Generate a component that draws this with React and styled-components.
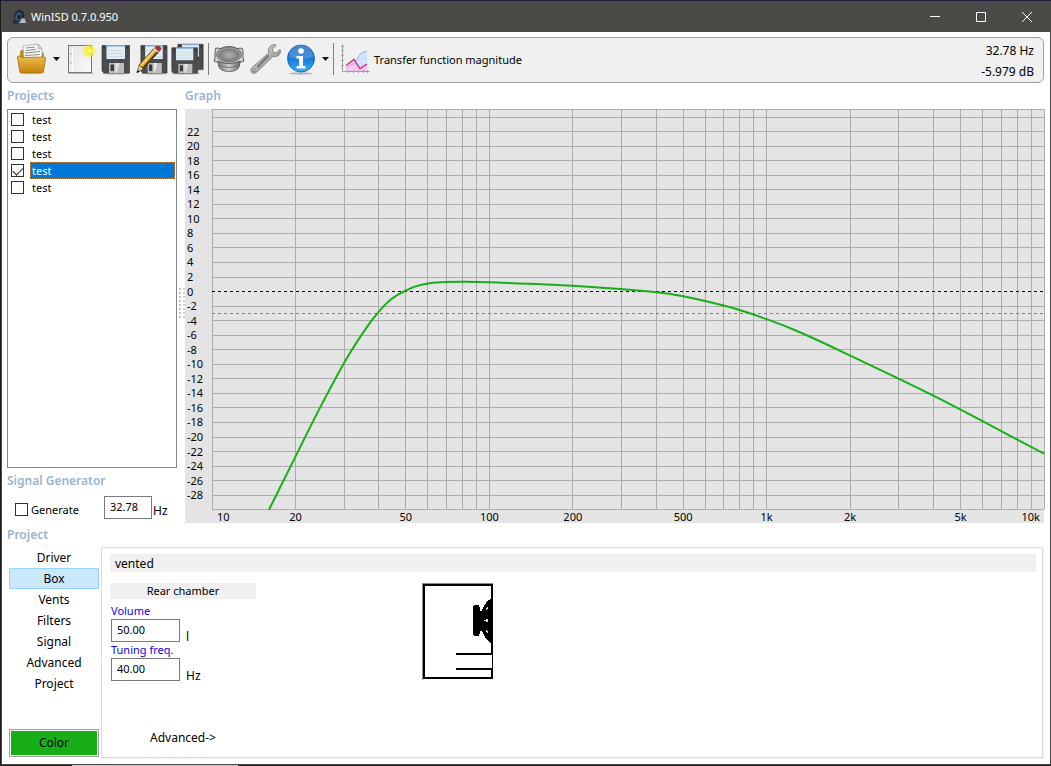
import React, { useState } from "react";
import styled, { createGlobalStyle } from "styled-components";

const GlobalStyle = createGlobalStyle`
    * {
        box-sizing: border-box;
    }
    body {
        margin: 0;
        font-family: "Noto Sans", "Open Sans", sans-serif;
        font-size: 12px;
        color: #000;
    }
    button, input {
        font: inherit;
        color: inherit;
    }
`;

const Desktop = styled.div`
    min-height: 100vh;
    display: flex;
    padding: 1px 0 1px 1px;
    background: linear-gradient(to right, #1c1c1e 72px, #c9c9c6 72px, #c9c9c6 238px, #1c1c1e 238px);
`;

const Window = styled.div`
    flex: 1;
    display: flex;
    flex-direction: column;
    background-color: #fff;
    border: 1px solid #4b4a47;
    border-top: none;
    box-shadow: 0 -1px 0 #251a40;
`;

const TitleBar = styled.header`
    display: flex;
    align-items: center;
    height: 31px;
    padding-left: 9px;
    gap: 4px;
    background-color: #4b4a47;
    color: #fff;
`;

const TitleText = styled.h1`
    flex: 1;
    margin: 0;
    font-size: 11px;
    font-weight: 400;
`;

const WindowButtons = styled.div`
    display: flex;
    height: 100%;
`;

const WindowBtn = styled.button`
    width: 46px;
    height: 100%;
    padding: 0;
    border: none;
    background: none;
    display: flex;
    justify-content: center;
    align-items: center;
`;

const Content = styled.main`
    flex: 1;
    display: flex;
    flex-direction: column;
    padding: 5px 6px 6px 5px;
`;

const Toolbar = styled.div`
    display: flex;
    align-items: center;
    height: 46px;
    padding: 0 9px 2px 6px;
    border: 1px solid #a0a0a0;
    border-radius: 6px;
    background-color: #f0f0f0;
`;

const ToolBtn = styled.button`
    width: ${props => props.$narrow ? "12px" : "36px"};
    height: 36px;
    padding: 0;
    border: none;
    background: none;
    display: flex;
    justify-content: center;
    align-items: center;
`;

const Separator = styled.div`
    width: 1px;
    height: 32px;
    margin: 0 2px;
    background-color: #808080;
`;

const PlotBtn = styled.button`
    display: flex;
    align-items: center;
    gap: 3px;
    padding: 0 0 0 3px;
    border: none;
    background: none;
    font-size: 11px;
`;

const Readout = styled.div`
    margin-left: auto;
    padding-top: 4px;
    text-align: right;
    line-height: 21px;
`;

const GroupTitle = styled.h2`
    margin: 0;
    font-size: 12px;
    font-weight: 600;
    line-height: 24px;
    color: #99b4d1;
`;

const Workspace = styled.div`
    flex: 1;
    display: grid;
    grid-template-columns: 170px 8px 1fr;
`;

const Column = styled.section`
    display: flex;
    flex-direction: column;
    min-width: 0;
    padding-top: 1px;
`;

const Splitter = styled.div`
    align-self: center;
    justify-self: end;
    width: 6px;
    height: 30px;
    border-left: 2px dotted #c4c4c4;
    border-right: 2px dotted #d0d0d0;
`;

const ProjectList = styled.ul`
    flex: 1;
    margin: 1px 0;
    padding: 1px;
    list-style: none;
    border: 1px solid #828790;
`;

const ProjectItem = styled.li`
    display: flex;
    align-items: center;
    gap: 6px;
    height: 17px;
    padding-left: 2px;
    font-size: 11px;
`;

const ProjectName = styled.label`
    flex: 1;
    padding-left: 2px;
    line-height: 17px;
    color: ${props => props.$selected ? "#fff" : "#000"};
    background-color: ${props => props.$selected ? "#0078d7" : "transparent"};
    outline: ${props => props.$selected ? "1px dotted #c98b4c" : "none"};
    outline-offset: -1px;
`;

const Check = styled.input.attrs({ type: "checkbox" })`
    appearance: none;
    flex: none;
    width: 13px;
    height: 13px;
    margin: 0;
    border: 1px solid #333;
    background-color: #fff;
    &:checked::after {
        content: "";
        display: block;
        width: 9px;
        height: 5px;
        margin: 2px 0 0 1px;
        border-left: 1px solid #222;
        border-bottom: 1px solid #222;
        transform: rotate(-45deg);
    }
`;

const GeneratorRow = styled.div`
    display: flex;
    align-items: center;
    gap: 1px;
    padding: 3px 0 4px 8px;
`;

const GeneratorToggle = styled.label`
    flex: 1;
    display: flex;
    align-items: center;
    gap: 3px;
    padding-top: 4px;
    font-size: 11px;
    line-height: 16px;
`;

const NumberInput = styled.input`
    width: ${props => props.$width};
    height: 23px;
    padding: 0 0 2px 5px;
    border: 1px solid #7a7a7a;
    border-radius: 0;
    outline: none;
    background-color: #fff;
    font-size: 11px;
`;

const Unit = styled.span`
    align-self: flex-end;
    width: 24px;
    line-height: 16px;
`;

const Chart = styled.div`
    flex: 1;
    display: grid;
    grid-template-columns: 27px 1fr;
    grid-template-rows: 1fr 14px;
    margin-top: 1px;
    background-color: #e4e4e4;
    svg {
        display: block;
        width: 100%;
        height: 100%;
        min-height: 0;
    }
    text {
        font-size: 11px;
    }
`;

const PlotCell = styled.div`
    min-height: 0;
    grid-column: ${props => props.$col};
`;

const ProjectArea = styled.div`
    display: grid;
    grid-template-columns: 94px 1fr;
    min-height: 211px;
    padding-right: 1px;
`;

const Tabs = styled.nav`
    display: flex;
    flex-direction: column;
    padding: 0 2px;
`;

const Tab = styled.button`
    height: 21px;
    padding: 0;
    border: 1px solid ${props => props.$active ? "#99d1ff" : "transparent"};
    background-color: ${props => props.$active ? "#cce8ff" : "transparent"};
    line-height: 19px;
`;

const ColorBtn = styled.button`
    height: 28px;
    margin: auto 0 1px;
    padding: 0;
    border: 1px solid #a0a0a0;
    background-color: #17ae17;
    box-shadow: inset 0 0 0 1px #f4f4f4;
    line-height: 24px;
`;

const Panel = styled.section`
    padding: 6px 6px 6px 8px;
    border: 1px solid #dcdcdc;
    box-shadow: 1px 1px 0 #f0f0f0;
    display: flex;
    flex-direction: column;
`;

const BoxType = styled.div`
    padding: 1px 0 0 5px;
    margin-bottom: 11px;
    line-height: 17px;
    background-color: #f0f0f0;
`;

const PanelBody = styled.div`
    flex: 1;
    display: flex;
    align-items: flex-start;
    gap: 166px;
`;

const Chamber = styled.div`
    align-self: stretch;
    display: flex;
    flex-direction: column;
    width: 146px;
`;

const ChamberTitle = styled.h3`
    margin: 0 0 4px;
    font-size: 11px;
    font-weight: 400;
    line-height: 16px;
    text-align: center;
    background-color: #f0f0f0;
`;

const FieldLabel = styled.label`
    padding-left: 1px;
    font-size: 11px;
    line-height: 16px;
    color: #1400e6;
`;

const FieldRow = styled.div`
    display: flex;
    gap: 6px;
    padding-left: 1px;
    ${Unit} {
        line-height: 11px;
    }
`;

const AdvancedBtn = styled.button`
    align-self: center;
    margin: auto 0 4px;
    padding: 0;
    border: none;
    background: none;
    line-height: 18px;
`;

const PLOT_W = 832;
const PLOT_H = 400;
const DB_TOP = 25.1;
const DB_BOTTOM = -29.9;

const fx = hz => (Math.log10(hz / 10) / 3) * PLOT_W;
const dy = db => ((DB_TOP - db) / (DB_TOP - DB_BOTTOM)) * PLOT_H;
const xPercent = hz => `${(fx(hz) / PLOT_W) * 100}%`;
const yPercent = db => `${(dy(db) / PLOT_H) * 100}%`;

const freqLines = [10, 100, 1000].flatMap(d => [1, 2, 3, 4, 5, 6, 7, 8, 9].map(n => n * d)).concat(10000);
const dbLines = Array.from({ length: 27 }, (_, i) => 24 - i * 2);
const dbLabels = Array.from({ length: 26 }, (_, i) => 22 - i * 2);

const freqLabels = [
    { hz: 10, text: "10", anchor: "start", dx: 5 },
    { hz: 20, text: "20" },
    { hz: 50, text: "50" },
    { hz: 100, text: "100" },
    { hz: 200, text: "200" },
    { hz: 500, text: "500" },
    { hz: 1000, text: "1k" },
    { hz: 2000, text: "2k" },
    { hz: 5000, text: "5k" },
    { hz: 10000, text: "10k", anchor: "end", dx: -4 },
];

// [Hz, dB]
const response = [
    [16.05, -30], [20, -22.7], [24.5, -16], [30.7, -9.1], [37.1, -4.3], [41.4, -2.1],
    [44.6, -0.95], [49.7, 0.1], [54.5, 0.75], [61, 1.15], [70, 1.32], [82, 1.35], [100, 1.28], [200, 0.8],
    [395, -0.07], [500, -0.65], [744, -2.2], [1000, -3.8], [1318, -5.6],
    [2000, -8.8], [4009, -14.35], [10000, -22.3],
];

const smoothPath = points => {
    const p = points.map(([hz, db]) => [fx(hz), dy(db)]);
    const slope = p.map((_, i) => {
        const a = p[Math.max(i - 1, 0)];
        const b = p[Math.min(i + 1, p.length - 1)];
        return (b[1] - a[1]) / (b[0] - a[0]);
    });
    let d = `M${p[0][0]} ${p[0][1]}`;
    for (let i = 1; i < p.length; i++) {
        const h = (p[i][0] - p[i - 1][0]) / 3;
        d += ` C${p[i - 1][0] + h} ${p[i - 1][1] + slope[i - 1] * h} ${p[i][0] - h} ${p[i][1] - slope[i] * h} ${p[i][0]} ${p[i][1]}`;
    }
    return d;
};

const ResponseChart = () => (
    <Chart>
        <PlotCell $col="1">
            <svg>
                {dbLabels.map(db => (
                    <text key={db} x="2" y={yPercent(db)} dy="4">{db}</text>
                ))}
            </svg>
        </PlotCell>
        <PlotCell $col="2">
            <svg viewBox={`0 0 ${PLOT_W} ${PLOT_H}`} preserveAspectRatio="none" overflow="visible">
                <g stroke="#acacac" fill="none" shapeRendering="crispEdges">
                    {freqLines.map(hz => (
                        <line key={hz} x1={fx(hz)} x2={fx(hz)} y1="0" y2={PLOT_H} vectorEffect="non-scaling-stroke" />
                    ))}
                    {dbLines.filter(db => db !== 0).map(db => (
                        <line key={db} x1="0" x2={PLOT_W} y1={dy(db)} y2={dy(db)} vectorEffect="non-scaling-stroke" />
                    ))}
                    <line x1="0" x2={PLOT_W} y1="0" y2="0" vectorEffect="non-scaling-stroke" />
                    <line x1="0" x2={PLOT_W} y1={PLOT_H} y2={PLOT_H} vectorEffect="non-scaling-stroke" />
                </g>
                <g strokeDasharray="3 3" shapeRendering="crispEdges">
                    <line x1="0" x2={PLOT_W} y1={dy(0)} y2={dy(0)} stroke="#000" vectorEffect="non-scaling-stroke" />
                    <line x1="0" x2={PLOT_W} y1={dy(-3)} y2={dy(-3)} stroke="#7f7f7f" vectorEffect="non-scaling-stroke" />
                </g>
                <path d={smoothPath(response)} fill="none" stroke="#17ae17" strokeWidth="2" vectorEffect="non-scaling-stroke" />
            </svg>
        </PlotCell>
        <PlotCell $col="2">
            <svg>
                {freqLabels.map(l => (
                    <text key={l.hz} x={xPercent(l.hz)} y="12" dx={l.dx || 0} textAnchor={l.anchor || "middle"}>{l.text}</text>
                ))}
            </svg>
        </PlotCell>
    </Chart>
);

const AppIcon = () => (
    <svg width="16" height="16" viewBox="0 0 16 16">
        <ellipse cx="8" cy="7" rx="5" ry="6.5" fill="#1c2a36" transform="rotate(20 8 7)" />
        <ellipse cx="7.5" cy="7.5" rx="3" ry="4.5" fill="#3d5468" transform="rotate(20 7 7)" />
        <ellipse cx="8" cy="8" rx="1.5" ry="2.2" fill="#141d26" transform="rotate(20 8 8)" />
        <path d="M1 12l5-1 1 4H3z" fill="#22303c" />
        <path d="M8 14l3-5 3 1 1 4z" fill="#b4b9bc" />
    </svg>
);

const OpenIcon = () => (
    <svg width="32" height="32" viewBox="0 0 32 32">
        <defs>
            <linearGradient id="folder" x2="0" y2="1">
                <stop offset="0" stopColor="#edbd55" />
                <stop offset="1" stopColor="#c78309" />
            </linearGradient>
        </defs>
        <ellipse cx="16" cy="29.500" rx="13" ry="1.500" fill="#000" opacity=".2" />
        <path d="M4 9q0-2 2-2h5l2 2h12q3 0 3 3v8H4z" fill="#c28a21" />
        <path d="M7 3l15-2 4 5 0 13H8z" fill="#fbfbfb" stroke="#999" strokeWidth=".7" />
        <path d="M22 1l0 5 4 0z" fill="#d5d5d5" stroke="#999" strokeWidth=".5" />
        <path d="M10 5l9-1M10 7.500l10-1M9 10l15-1.500M9 12.500l15-1" stroke="#888" strokeWidth="1" />
        <path d="M1.500 15q-.5-2 2-2 2.500 2 6 1.500l18-.5q2.500 0 2 2l-2 12q-.5 2-3 2H6q-2 0-2.300-2z" fill="url(#folder)" stroke="#a66e0b" strokeWidth=".8" />
    </svg>
);

const NewIcon = () => (
    <svg width="32" height="32" viewBox="0 0 32 32">
        <defs>
            <radialGradient id="glow">
                <stop offset="0" stopColor="#fffdb0" />
                <stop offset=".4" stopColor="#fbee28" />
                <stop offset="1" stopColor="#fbee28" stopOpacity="0" />
            </radialGradient>
            <linearGradient id="sheet" x2="1" y2="1">
                <stop offset="0" stopColor="#e3e3e3" />
                <stop offset="1" stopColor="#fbfbfb" />
            </linearGradient>
        </defs>
        <path d="M4.500 30.500h25" stroke="#000" strokeOpacity=".25" />
        <rect x="4.500" y="2.500" width="23" height="27" fill="url(#sheet)" stroke="#777" />
        <path d="M8.500 4v24" stroke="#fff" />
        <circle cx="7" cy="11" r=".8" fill="#aaa" />
        <circle cx="7" cy="20" r=".8" fill="#aaa" />
        <circle cx="25" cy="8" r="7.500" fill="url(#glow)" />
    </svg>
);

const Floppy = () => (
    <>
        <path d="M2 2.500h27.500V30H4l-2-2z" fill="#4b4c4d" stroke="#3a3a3a" strokeWidth=".7" />
        <path d="M6.500 2.500H25V16H6.500z" fill="#e2ecf4" />
        <path d="M6.500 2h18.500v1.500H6.500z" fill="#7fa8cc" />
        <path d="M8 7.500h15.500M8 10.500h15.500M8 13.500h15.500" stroke="#c8d6e1" strokeWidth=".8" />
        <path d="M3 4h2v2H3zM26.500 4h2v2h-2z" fill="#2c2c2c" />
        <path d="M9 20h15v10H9z" fill="#bdbdbd" />
        <path d="M10.500 21.500H14V28h-3.500z" fill="#3c3c3c" />
        <path d="M15.500 20h4l-3 10h-1z" fill="#e6e6e6" />
    </>
);

const SaveIcon = () => (
    <svg width="32" height="32" viewBox="0 0 32 32">
        <ellipse cx="16" cy="30.500" rx="14" ry="1" fill="#000" opacity=".25" />
        <Floppy />
    </svg>
);

const SaveAsIcon = () => (
    <svg width="32" height="32" viewBox="0 0 32 32">
        <ellipse cx="18" cy="30.500" rx="13" ry="1" fill="#000" opacity=".25" />
        <g transform="translate(3 0) scale(.95 1)"><Floppy /></g>
        <path d="M3 22L18.500 5l4.500 3.500L7.500 26z" fill="#edaf28" stroke="#33240b" strokeWidth=".8" />
        <path d="M4.500 22.500L19.500 6" stroke="#fbdc73" strokeWidth="1.500" />
        <path d="M6.800 25L22 8.200" stroke="#3a2d12" strokeWidth="1.300" />
        <path d="M19 4.500l1.500-1q4-1 4.500 2.500l-1.500 2z" fill="#d6201f" stroke="#6d1513" strokeWidth=".6" />
        <path d="M18 5.500l4.500 3.700" stroke="#d7d7d7" strokeWidth="1.300" />
        <path d="M3 22l4.500 4-6.500 3.500z" fill="#ecd2a0" stroke="#3a2a10" strokeWidth=".6" />
        <path d="M1.800 27l2 1.500-3.300 1.700z" fill="#111" />
    </svg>
);

const SaveAllIcon = () => (
    <svg width="34" height="32" viewBox="0 0 34 32">
        <g transform="translate(5 -1) scale(.92 .92)"><Floppy /></g>
        <ellipse cx="15" cy="30.500" rx="14" ry="1" fill="#000" opacity=".25" />
        <path d="M.500 4.500h27v26h-27z" fill="#000" opacity=".2" />
        <g transform="translate(-1 2.500) scale(.93 .92)"><Floppy /></g>
    </svg>
);

const DriverIcon = () => (
    <svg width="34" height="32" viewBox="0 0 34 32">
        <defs>
            <linearGradient id="magnet">
                <stop offset="0" stopColor="#6a6a6a" />
                <stop offset=".5" stopColor="#cfcfcf" />
                <stop offset="1" stopColor="#5c5c5c" />
            </linearGradient>
            <radialGradient id="cone">
                <stop offset="0" stopColor="#b5b5b5" />
                <stop offset="1" stopColor="#7c7c7c" />
            </radialGradient>
        </defs>
        <path d="M5 15l2 9q2 4.500 10 4.500T27 24l2-9z" fill="url(#magnet)" stroke="#555" strokeWidth=".8" />
        <path d="M7 22q10 5 20 0" fill="none" stroke="#777" strokeWidth="1" />
        <path d="M2 18l1-3V9L3.500 5.500 6 5l2 .7q9-4.500 18 0L28 5l2.500.5L31 9v6l1 3-2 1-3-.5q-10 4-20 0L4 19z" fill="#d0d0d0" stroke="#4e4e4e" strokeWidth=".9" />
        <ellipse cx="17" cy="11.500" rx="12.500" ry="7.500" fill="#9c9c9c" stroke="#666" strokeWidth=".8" />
        <ellipse cx="17" cy="12" rx="10" ry="5.800" fill="url(#cone)" stroke="#6e6e6e" strokeWidth=".6" />
        <ellipse cx="17" cy="13" rx="3.500" ry="2" fill="#a6a6a6" />
    </svg>
);

const WrenchIcon = () => (
    <svg width="32" height="32" viewBox="0 0 32 32">
        <defs>
            <linearGradient id="steel" x2="1" y2="1">
                <stop offset="0" stopColor="#ededed" />
                <stop offset=".55" stopColor="#aaa" />
                <stop offset="1" stopColor="#888" />
            </linearGradient>
        </defs>
        <path
            d="M19.500 10q-1-4.500 2-7 2.500-2 5-1.500l.5 1.500-3.500 2 .5 4 3.500 1 3-3.500 1 .5q.5 3.500-2 5.500-2.500 1.500-5.500 1L8 29q-2.500 2.500-5 1-2.500-2.500-.5-5z"
            fill="url(#steel)" stroke="#7c7c7c" strokeWidth=".8"
        />
        <path d="M9 23.500L19 13" stroke="#747474" strokeWidth="2" strokeLinecap="round" />
        <circle cx="5" cy="27.300" r="1.300" fill="#eee" stroke="#666" strokeWidth=".8" />
    </svg>
);

const InfoIcon = () => (
    <svg width="32" height="32" viewBox="0 0 32 32">
        <defs>
            <linearGradient id="blue" x2="0" y2="1">
                <stop offset="0" stopColor="#1b64b8" />
                <stop offset=".5" stopColor="#1679da" />
                <stop offset="1" stopColor="#36b2fb" />
            </linearGradient>
        </defs>
        <ellipse cx="16" cy="30.500" rx="12" ry="1.200" fill="#000" opacity=".25" />
        <circle cx="16" cy="15.500" r="13.500" fill="url(#blue)" stroke="#1257a4" strokeWidth=".8" />
        <path d="M4 14a12 12 0 0 1 24 0q-12 4-24 0z" fill="#fff" opacity=".2" />
        <circle cx="16" cy="8" r="2.800" fill="#fff" />
        <path d="M11.500 13H18v10h2.500v2.500h-9V23H14v-7.500h-2.500z" fill="#fff" />
    </svg>
);

const PlotIcon = () => (
    <svg width="32" height="32" viewBox="0 0 32 32">
        <path d="M7 23l8-6 5 8 8-4v7H7z" fill="#f8c6ee" />
        <path d="M17 18l4-6q2-3 7-4v13l-6 4z" fill="#d0e5fb" />
        <path d="M16 19l4-6q2-4 8-5" fill="none" stroke="#9abdf0" strokeWidth="1.200" />
        <path d="M7 26q5-6 10-5" fill="none" stroke="#b9a8f0" strokeWidth="1" />
        <path d="M7 22.500l8-6 6 9 7-4.500" fill="none" stroke="#c22a80" strokeWidth="1.300" />
        <path d="M3.500 2v26.500H30" fill="none" stroke="#a0a0a0" />
        <path d="M2 7.500h3M2 12.500h3M2 17.500h3M2 22.500h3M9.500 27v3M14.500 27v3M19.500 27v3M24.500 27v3" fill="none" stroke="#a8a8a8" />
        <path d="M2 4l1.500-3 1.500 3zM28 27l3 1.500-3 1.500z" fill="#999" />
    </svg>
);

const ArrowIcon = () => (
    <svg width="7" height="4" viewBox="0 0 7 4">
        <path d="M0 0h7L3.500 4z" fill="#111" />
    </svg>
);

const CabinetDrawing = () => (
    <svg width="71" height="97" viewBox="0 0 71 97" shapeRendering="crispEdges">
        <path d="M.5 97V.5H71" fill="none" stroke="#8a8a8a" />
        <path d="M70 34V2H2v93h68V45" fill="none" stroke="#000" strokeWidth="2" />
        <path d="M70 71v14" stroke="#fff" strokeWidth="2" />
        <path d="M34 71h36M34 86h36" stroke="#000" strokeWidth="2" />
        <path d="M51 25q0-3 3-3.500 4 0 4.500 6l1.500 0q3-8 7.500-11l3.500-1v44h-3q-5-4-8-12l-1.500 0q-.5 6-4.500 6-3-.5-3-3.500z" fill="#000" />
        <path d="M64 25l2-1v2l-2 1zM62 37h2v-1h2v3h-2v-1h-2zM64 47l2 1v2l-2-1z" fill="#ddd" />
        <path d="M70.500 71v15" stroke="#000" />
    </svg>
);

const App = () => {
    const [selected, setSelected] = useState(3);
    const [tab, setTab] = useState("Box");

    return (
        <Desktop>
            <GlobalStyle />
            <Window>
                <TitleBar>
                    <AppIcon />
                    <TitleText>WinISD 0.7.0.950</TitleText>
                    <WindowButtons>
                        <WindowBtn aria-label="Minimize">
                            <svg width="10" height="10"><path d="M0 4.500h10" stroke="#fff" /></svg>
                        </WindowBtn>
                        <WindowBtn aria-label="Maximize">
                            <svg width="10" height="10"><path d="M.5.5h9v9h-9z" fill="none" stroke="#fff" /></svg>
                        </WindowBtn>
                        <WindowBtn aria-label="Close">
                            <svg width="10" height="10"><path d="M0 0l10 10M10 0L0 10" stroke="#fff" /></svg>
                        </WindowBtn>
                    </WindowButtons>
                </TitleBar>

                <Content>
                    <Toolbar>
                        <ToolBtn aria-label="Open project"><OpenIcon /></ToolBtn>
                        <ToolBtn $narrow aria-label="Recent projects"><ArrowIcon /></ToolBtn>
                        <ToolBtn aria-label="New project"><NewIcon /></ToolBtn>
                        <ToolBtn aria-label="Save"><SaveIcon /></ToolBtn>
                        <ToolBtn aria-label="Save as"><SaveAsIcon /></ToolBtn>
                        <ToolBtn aria-label="Save all"><SaveAllIcon /></ToolBtn>
                        <Separator />
                        <ToolBtn aria-label="Drivers"><DriverIcon /></ToolBtn>
                        <ToolBtn aria-label="Options"><WrenchIcon /></ToolBtn>
                        <ToolBtn aria-label="About"><InfoIcon /></ToolBtn>
                        <ToolBtn $narrow aria-label="Help menu"><ArrowIcon /></ToolBtn>
                        <Separator />
                        <PlotBtn><PlotIcon />Transfer function magnitude</PlotBtn>
                        <Readout>
                            <div>32.78 Hz</div>
                            <div>-5.979 dB</div>
                        </Readout>
                    </Toolbar>

                    <Workspace>
                        <Column>
                            <GroupTitle>Projects</GroupTitle>
                            <ProjectList>
                                {[0, 1, 2, 3, 4].map(i => (
                                    <ProjectItem key={i} onClick={() => setSelected(i)}>
                                        <Check id={`project-${i}`} defaultChecked={i === 3} />
                                        <ProjectName htmlFor={`project-${i}`} $selected={selected === i}>test</ProjectName>
                                    </ProjectItem>
                                ))}
                            </ProjectList>
                            <GroupTitle>Signal Generator</GroupTitle>
                            <GeneratorRow>
                                <GeneratorToggle><Check />Generate</GeneratorToggle>
                                <NumberInput $width="48px" defaultValue="32.78" aria-label="Generator frequency" />
                                <Unit>Hz</Unit>
                            </GeneratorRow>
                        </Column>
                        <Splitter />
                        <Column>
                            <GroupTitle>Graph</GroupTitle>
                            <ResponseChart />
                        </Column>
                    </Workspace>

                    <GroupTitle>Project</GroupTitle>
                    <ProjectArea>
                        <Tabs>
                            {["Driver", "Box", "Vents", "Filters", "Signal", "Advanced", "Project"].map(name => (
                                <Tab key={name} $active={tab === name} onClick={() => setTab(name)}>{name}</Tab>
                            ))}
                            <ColorBtn>Color</ColorBtn>
                        </Tabs>
                        <Panel>
                            <BoxType>vented</BoxType>
                            <PanelBody>
                                <Chamber>
                                    <ChamberTitle>Rear chamber</ChamberTitle>
                                    <FieldLabel htmlFor="volume">Volume</FieldLabel>
                                    <FieldRow>
                                        <NumberInput id="volume" $width="69px" defaultValue="50.00" />
                                        <Unit>l</Unit>
                                    </FieldRow>
                                    <FieldLabel htmlFor="tuning">Tuning freq.</FieldLabel>
                                    <FieldRow>
                                        <NumberInput id="tuning" $width="69px" defaultValue="40.00" />
                                        <Unit>Hz</Unit>
                                    </FieldRow>
                                    <AdvancedBtn>Advanced-&gt;</AdvancedBtn>
                                </Chamber>
                                <CabinetDrawing />
                            </PanelBody>
                        </Panel>
                    </ProjectArea>
                </Content>
            </Window>
        </Desktop>
    );
};

export default App;
